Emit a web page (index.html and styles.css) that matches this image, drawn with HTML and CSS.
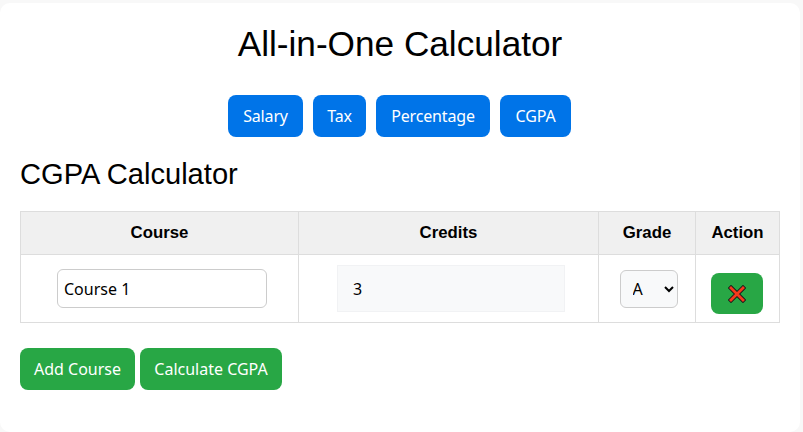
FILE: index.html
```html
<!DOCTYPE html>
<html lang="en">
<head>
<meta charset="utf-8">
<title>All-in-One Calculator</title>
<link rel="stylesheet" href="styles.css">
</head>
<body>
<main class="container">
  <h1 class="title">All-in-One Calculator</h1>
  <nav class="tabs">
    <button class="btn btn-blue tab-salary">Salary</button>
    <button class="btn btn-blue tab-tax">Tax</button>
    <button class="btn btn-blue tab-percentage">Percentage</button>
    <button class="btn btn-blue tab-cgpa">CGPA</button>
  </nav>
  <h2 class="subtitle">CGPA Calculator</h2>
  <table class="grid">
    <colgroup>
      <col class="col-course"><col class="col-credits"><col class="col-grade"><col class="col-action">
    </colgroup>
    <thead>
      <tr><th>Course</th><th>Credits</th><th>Grade</th><th>Action</th></tr>
    </thead>
    <tbody>
      <tr>
        <td class="cell-field"><input class="field field-course" type="text" value="Course 1"></td>
        <td class="cell-field"><input class="field field-credits" type="text" value="3"></td>
        <td class="cell-select"><select class="field field-grade"><option>A</option><option>B</option><option>C</option></select></td>
        <td>
          <button class="btn btn-green btn-delete" aria-label="Delete">
            <svg class="x-icon" viewBox="0 0 18 18" width="18" height="18" aria-hidden="true">
              <path d="M3 3 L15 15 M15 3 L3 15" stroke="#1a1a1a" stroke-width="4.6" stroke-linecap="square" fill="none"/>
              <path d="M3 3 L15 15 M15 3 L3 15" stroke="#f5391c" stroke-width="2.8" stroke-linecap="square" fill="none"/>
            </svg>
          </button>
        </td>
      </tr>
    </tbody>
  </table>
  <div class="actions">
    <button class="btn btn-green btn-add">Add Course</button>
    <button class="btn btn-green btn-calc">Calculate CGPA</button>
  </div>
</main>
</body>
</html>
```
FILE: styles.css
```css
* { box-sizing: border-box; }
html, body { margin: 0; height: 100%; overflow: hidden; }
body {
  background: #f8f8f8;
  padding: 3px 3px 0 0;
  font-family: "Liberation Sans", Arial, sans-serif;
}
.container {
  width: 800px;
  height: 429px;
  background: #fff;
  border-radius: 10px;
  padding: 20px;
}
.title {
  margin: 0;
  font-size: 35.2px;
  font-weight: 400;
  line-height: 41px;
  text-align: center;
  color: #000;
}
.tabs {
  display: flex;
  justify-content: center;
  gap: 10px;
  margin-top: 31px;
  padding-right: 1px;
}
.btn {
  border: 0;
  border-radius: 8px;
  height: 42px;
  padding: 0;
  font-family: "Noto Sans", "Open Sans", sans-serif;
  font-size: 16px;
  color: #fff;
}
.btn-blue { background: #0074e8; letter-spacing: -0.15px; }
.btn-green { background: #28a745; }
.tab-salary { width: 75px; }
.tab-tax { width: 53px; }
.tab-percentage { width: 114px; }
.tab-cgpa { width: 71px; }
.btn-add { width: 115px; }
.btn-calc { width: 142px; }
.subtitle {
  margin: 21px 0 0;
  font-size: 29.1px;
  font-weight: 400;
  line-height: 33px;
  color: #000;
}
.grid {
  width: 759px;
  margin-top: 20px;
  border-collapse: collapse;
  table-layout: fixed;
}
.col-course { width: 278px; }
.col-credits { width: 300px; }
.col-grade { width: 97px; }
.col-action { width: 84px; }
.grid th, .grid td {
  border: 1px solid #ddd;
  text-align: center;
  padding: 0;
}
.grid th {
  height: 43px;
  background: #f0f0f0;
  font-size: 16.8px;
  font-weight: 700;
}
.grid td { height: 68px; vertical-align: middle; }
.grid .cell-field { padding-left: 5px; }
.grid .cell-select { padding-left: 3px; }
.field {
  font-family: "Noto Sans", "Open Sans", sans-serif;
  font-size: 16px;
  color: #000;
  vertical-align: middle;
}
.field-course {
  width: 210px;
  height: 39px;
  padding: 0 6px;
  border: 1px solid #ccc;
  border-radius: 6px;
  background: #fff;
}
.field-credits {
  width: 228px;
  height: 47px;
  padding: 0 15px;
  border: 1px solid #f1f2f4;
  border-radius: 0;
  background: #f8f9fa;
}
.field-grade {
  width: 58px;
  height: 38px;
  padding: 0 4px 0 8px;
  border: 1px solid #ccc;
  border-radius: 6px;
  background: #f8f9fa;
}
.btn-delete {
  width: 52px;
  height: 41px;
  margin: 10px 1px 0 0;
  display: inline-flex;
  align-items: center;
  justify-content: center;
  vertical-align: middle;
}
.x-icon { display: block; }
.actions {
  display: flex;
  gap: 5px;
  margin-top: 25px;
}
```
